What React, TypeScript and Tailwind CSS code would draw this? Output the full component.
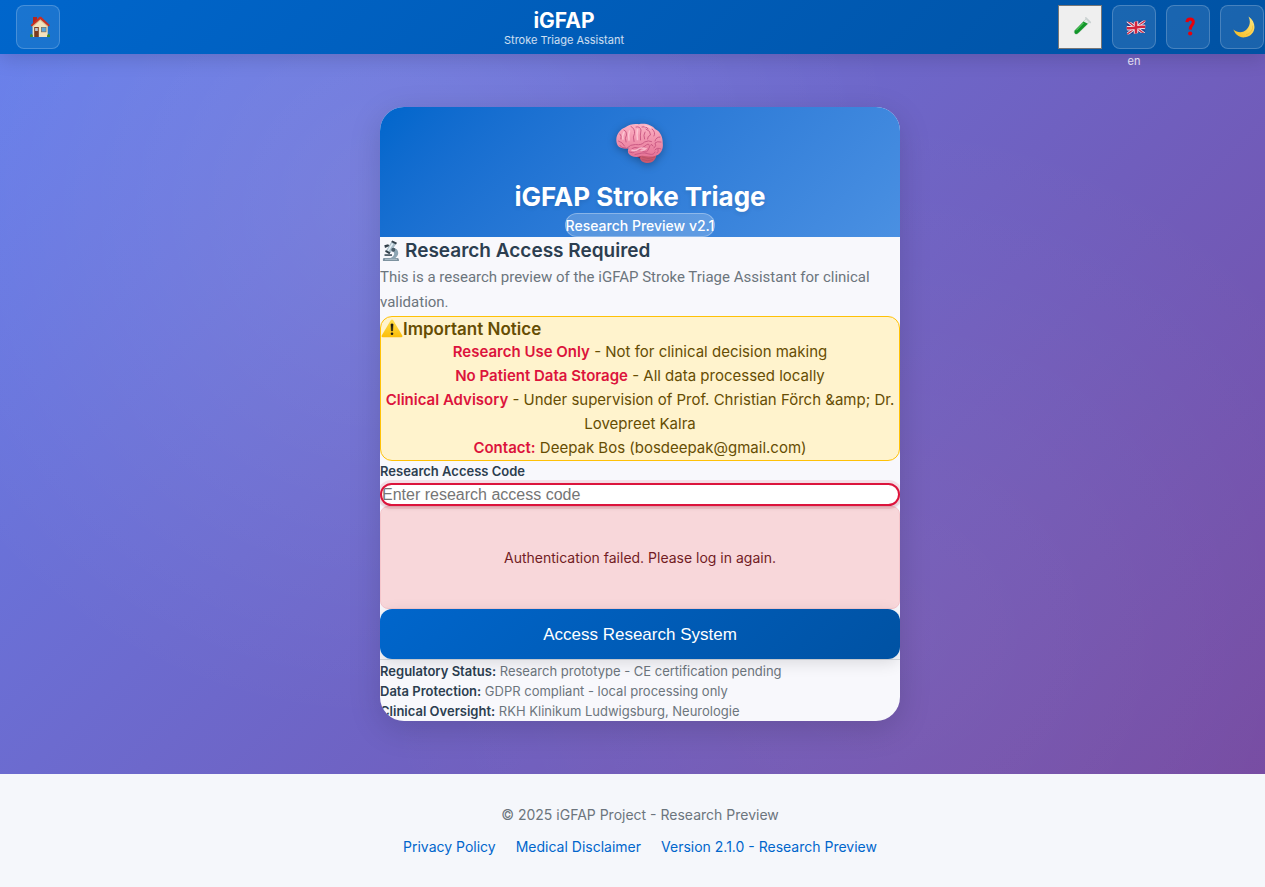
import React from "react";

const UI = "font-[Inter,'Liberation_Sans',sans-serif]";

function HouseIcon() {
  return (
    <svg width="22" height="22" viewBox="0 0 22 22" aria-hidden="true">
      <rect x="4" y="1" width="4" height="6" fill="#b3261e" />
      <path d="M3.6 9.5 11.3 2l7.4 7.5V21H3.6z" fill="#f3e2bd" />
      <path d="M3.6 9.5 11.3 2l7.4 7.5v1.8L11.3 4.6 3.6 11.3z" fill="#d8bf90" />
      <path d="M1.6 9.2 10.6.8h1.5l8.8 8.4-1.2 1.2-8.4-7.2-8.5 7.2z" fill="#c92f22" />
      <rect x="5.2" y="11" width="4.6" height="10" fill="#7a3b22" />
      <rect x="6.1" y="12" width="2.7" height="3" fill="#b9c4cf" />
      <rect x="12" y="11" width="5.4" height="5.2" fill="#8b6a45" />
      <rect x="12.6" y="11.5" width="4.2" height="4.1" fill="#58a6dc" />
      <path d="M1 21v-1.6q1-1.8 2-1.2t.8 2.8zM18 21q-.2-2.4 1-2.8t2 1.2V21z" fill="#3f8a2a" />
    </svg>
  );
}

function TubeIcon() {
  return (
    <svg width="22" height="22" viewBox="0 0 22 22" aria-hidden="true">
      <path d="M15.3 2.600 18.6 5.900 7.1 17.400Q5.400 19 3.900 17.700 2.300 16 3.900 14.200z" fill="#e3ebe6" stroke="#a9b8b0" strokeWidth=".5" />
      <path d="M12.500 5.600 16.800 7.700 7 17.300Q5.400 18.800 4 17.500 2.600 16 4 14.300z" fill="#12962a" />
      <path d="M12.600 6.800 5.200 14.400" stroke="#6edc70" strokeWidth="1" />
      <path d="M14.800 1.900 19.300 6.400" stroke="#c9d0d0" strokeWidth="1.500" strokeLinecap="round" />
    </svg>
  );
}

function FlagIcon() {
  return (
    <svg width="20" height="15" viewBox="0 0 20 15" aria-hidden="true">
      <defs>
        <clipPath id="flag-shape">
          <path d="M.6 1.600Q5 3 10 1.600T19.400 .6L19 13Q14 12.400 9.600 13.600T1 14.200z" />
        </clipPath>
      </defs>
      <g clipPath="url(#flag-shape)">
        <rect width="20" height="15" fill="#26418f" />
        <path d="M0 0 20 15M20 0 0 15" stroke="#e9e9f2" strokeWidth="3" />
        <path d="M0 0 20 15M20 0 0 15" stroke="#d3233c" strokeWidth="1.300" />
        <path d="M10 0V15M0 8Q5 8.800 10 7.600T20 7" stroke="#e9e9f2" strokeWidth="4.400" fill="none" />
        <path d="M10 0V15M0 8Q5 8.800 10 7.600T20 7" stroke="#d3233c" strokeWidth="2.600" fill="none" />
      </g>
    </svg>
  );
}

function QuestionIcon() {
  return (
    <svg width="22" height="22" viewBox="0 0 22 22" aria-hidden="true">
      <path d="M7.900 6.100Q8.300 3 11.200 3q3.100 0 3.100 3.100 0 1.800-1.500 3.300-1.500 1.500-1.600 4.200" fill="none" stroke="#e8000b" strokeWidth="3" />
      <circle cx="11.200" cy="17.500" r="2.100" fill="#e8000b" />
    </svg>
  );
}

function MoonIcon() {
  return (
    <svg width="24" height="24" viewBox="0 0 24 24" aria-hidden="true">
      <defs>
        <linearGradient id="moon-fill" x1="0" y1="1" x2="1" y2="0">
          <stop offset="0" stopColor="#f6b91e" />
          <stop offset="1" stopColor="#ffe880" />
        </linearGradient>
      </defs>
      <path d="M16.500 1.500C25.500 7.500 24.300 20.800 13 22.300 7.300 23 3 19.500 1.400 14.600c4.300 3.600 10 3.400 13.400-.3 3.400-3.700 3.900-8.500 1.700-12.800z" fill="url(#moon-fill)" />
      <path d="M20.700 10.500q.5 7-6.700 9.400" fill="none" stroke="#e9a514" strokeWidth=".8" opacity=".5" />
    </svg>
  );
}

function BrainIcon() {
  return (
    <svg width="50" height="44" viewBox="0 0 50 44" className="drop-shadow-[0_2px_4px_rgba(0,0,0,0.3)]" aria-hidden="true">
      <defs>
        <linearGradient id="brain-fill" x1="0" y1="0" x2="0" y2="1">
          <stop offset="0" stopColor="#fdb3c4" />
          <stop offset="1" stopColor="#e57396" />
        </linearGradient>
      </defs>
      <path d="M21 33q3 4 6 4l4 3-2-9z" fill="#7d2748" />
      <path d="M25 36c0-4 5-5 9-5s8 1 7 4-4 6-8 6-8-2-8-5z" fill="#c9596f" />
      <path d="M27 35q6 3 13 0M27 37.500q6 2.500 11 0" stroke="#b04a63" strokeWidth=".6" fill="none" />
      <path d="M2 22C-.5 15 4 7.500 10 5.500 14 2 20 1.500 24 2.200 30 .8 37 3 40 7c5 2 8 8 7.700 14 1 6-2 12-8 13-5 1.500-9-.5-13-.3-5 2.300-11 1.300-13.500-2.700-.4-1.800-.5-3 .3-4.500C8 27 3.500 26 2 22z" fill="url(#brain-fill)" />
      <g fill="none" stroke="#c65580" strokeWidth=".9" strokeLinecap="round" strokeLinejoin="round">
        <path d="M11.500 26.500q4-4.500 9-4 6 1 9-2.500 4-2 7-.5M11 26Q6 26 5 23.500M3.500 19q4 1 6 5M5 12q2 2 1 5M9 8q3 1 2.500 5-2 3-.5 7M16 4.500q4 2 3.500 7-2 3-.5 8M21 5q4-1 5 3-1 5-.5 10M27 5q5-1 6 2M30 10q-2 3-.5 7M31 7q5 2 4.500 6-3 1-3 4M37 7q4 3 2 7M45 15q-4 0-5 4M46 20q-4-1-6 1 2 3-1 5M46 27q-4-2-6 1" />
        <path d="M14 30q4 2 7-1t7 0 6-3 4-2M17 26.500q3-2 6-.5t7-2 4-1M20 32.500q5-1 7-1.500t7 1 6-2M42 31q2-1 1-4" />
      </g>
      <path d="M9 10q-2 4-1 7M14.500 9q-1.500 4-.5 9M22.500 7.500q-1 5 0 10M17 28.300q4 1 6-1t6-1M26 28.500q3 0 5-2M30 4q4 0 6 2" stroke="#ffd0dc" strokeWidth="1.600" strokeLinecap="round" fill="none" opacity=".75" />
    </svg>
  );
}

function MicroscopeIcon() {
  return (
    <svg width="20" height="22" viewBox="0 0 20 22" className="shrink-0" aria-hidden="true">
      <path d="M3 18h13.500q1.500 0 1.500 3H2q-.5-3 1-3z" fill="#7d929f" />
      <path d="M11.500 7.500q6 1 5.700 6-.3 3-3.200 5H8.500q4.500-2 4.700-4.800-.2-2.700-3.700-2.600z" fill="#8da5b3" />
      <path d="M3.500 14.300H11v1.600H3.500z" fill="#41525e" />
      <path d="M10.500 1.800 15 4l-5.600 9L5 10.600z" fill="#a9bdc8" />
      <path d="M11.600 3.500 7 10.800" stroke="#e4eef4" strokeWidth="1.500" />
      <path d="M11.300.4 16 2.800l-1 1.700-4.800-2.400zM4.800 10l4.600 2.600-1 1.600-4.300-2.400zM3.300 5.200l3.900-.9 1.200 1.600-4.400 2z" fill="#33404a" />
      <circle cx="12.300" cy="9.800" r="2" fill="#4a5c68" />
      <path d="M4 19.300h12" stroke="#b9c9d2" strokeWidth=".9" />
    </svg>
  );
}

function WarningIcon() {
  return (
    <svg width="22" height="20" viewBox="0 0 22 20" className="shrink-0" aria-hidden="true">
      <defs>
        <linearGradient id="warn-fill" x1="0" y1="0" x2="0" y2="1">
          <stop offset="0" stopColor="#ffdf4f" />
          <stop offset="1" stopColor="#fbbd08" />
        </linearGradient>
      </defs>
      <path d="M9.900 1.100q1.100-1.400 2.200 0L21.300 16.600q.6 1.600-1 1.700H1.700Q.1 18.200.7 16.600z" fill="url(#warn-fill)" />
      <path d="M9.900 5.200q1.100-.9 2.200 0l-.5 6.700h-1.200z" fill="#1c1a12" stroke="#1c1a12" strokeWidth=".5" />
      <circle cx="11" cy="14.800" r="1.300" fill="#1c1a12" />
    </svg>
  );
}

function HeaderButton({ label, children }: { label: string; children: React.ReactNode }) {
  return (
    <button
      type="button"
      aria-label={label}
      className="flex size-11 shrink-0 items-center justify-center rounded-lg border border-white/20 bg-white/10 pl-[3px]"
    >
      {children}
    </button>
  );
}

const notices = [
  { term: "Research Use Only", text: " - Not for clinical decision making" },
  { term: "No Patient Data Storage", text: " - All data processed locally" },
  { term: "Clinical Advisory", text: " - Under supervision of Prof. Christian Förch &amp; Dr. Lovepreet Kalra" },
  { term: "Contact:", text: " Deepak Bos (bosdeepak@gmail.com)" },
];

const facts = [
  { term: "Regulatory Status:", text: " Research prototype - CE certification pending" },
  { term: "Data Protection:", text: " GDPR compliant - local processing only" },
  { term: "Clinical Oversight:", text: " RKH Klinikum Ludwigsburg, Neurologie" },
];

export default function App() {
  return (
    <div className={`flex min-h-screen flex-col overflow-x-hidden ${UI}`}>
      <header className="relative z-10 flex items-center bg-linear-135 from-[#0066cc] to-[#0052a3] py-[5px] pr-px pl-4 text-white shadow-[0_4px_20px_rgba(0,0,0,0.15)]">
        <HeaderButton label="Home">
          <HouseIcon />
        </HeaderButton>
        <div className="flex-1 pt-[3px] pl-2.5 text-center">
          <h1 className="text-[21px] leading-6 font-bold">iGFAP</h1>
          <p className="text-[11px] leading-[15px] text-white/80">Stroke Triage Assistant</p>
        </div>
        <div className="flex gap-2.5">
          <button
            type="button"
            aria-label="Run test case"
            className="flex size-11 items-center justify-center border border-[#767676] bg-[#efefef] pl-[3px]"
          >
            <TubeIcon />
          </button>
          <div className="relative">
            <HeaderButton label="Switch language">
              <FlagIcon />
            </HeaderButton>
            <span className="absolute top-full left-0 mt-1 w-full text-center text-[11px] leading-4 text-white/80">en</span>
          </div>
          <HeaderButton label="Help">
            <QuestionIcon />
          </HeaderButton>
          <HeaderButton label="Dark mode">
            <MoonIcon />
          </HeaderButton>
        </div>
      </header>

      <main className="flex flex-1 items-center justify-center bg-[radial-gradient(circle_at_30%_20%,rgba(255,255,255,0.1)_0%,transparent_50%),radial-gradient(circle_at_70%_80%,rgba(255,255,255,0.05)_0%,transparent_50%),linear-gradient(135deg,#667eea_0%,#764ba2_100%)] py-8 pl-[15px]">
        <div className="w-full max-w-[520px] overflow-hidden rounded-3xl bg-[#f8f8fc] shadow-[0_8px_32px_rgba(0,0,0,0.15)]">
          <div className="flex flex-col items-center bg-linear-135 from-[#0066cc] to-[#4a90e2] pt-[15px] text-white">
            <BrainIcon />
            <h2 className="mt-[14px] text-[26px] leading-[33px] font-bold [text-shadow:0_2px_4px_rgba(0,0,0,0.1)]">
              iGFAP Stroke Triage
            </h2>
            <span className="rounded-full border border-white/30 bg-white/20 pt-0.5 text-sm leading-5 font-medium">
              Research Preview v2.1
            </span>
          </div>

          <h3 className="flex items-center gap-1 pl-px text-[19px] leading-7 font-semibold text-[#2c3e50]">
            <MicroscopeIcon />
            Research Access Required
          </h3>
          <p className="font-[Roboto,sans-serif] text-[15px] leading-[25px] text-[#6c757d]">
            This is a research preview of the iGFAP Stroke Triage Assistant for clinical validation.
          </p>

          <section className="mt-px rounded-xl border border-[#ffc107] bg-[#fff3cd] text-[#664d03]">
            <h4 className="flex items-center pt-px text-[17px] leading-[22px] font-semibold">
              <WarningIcon />
              Important Notice
            </h4>
            <ul className="text-center text-[15px] leading-6">
              {notices.map((n) => (
                <li key={n.term}>
                  <strong className="font-semibold text-[#dc143c]">{n.term}</strong>
                  {n.text}
                </li>
              ))}
            </ul>
          </section>

          <form onSubmit={(e) => e.preventDefault()}>
            <label htmlFor="access-code" className="block pb-0.5 text-[13px] leading-5 font-semibold text-[#2c3e50]">
              Research Access Code
            </label>
            <input
              id="access-code"
              type="password"
              placeholder="Enter research access code"
              className="relative block h-[23px] w-full rounded-xl border-2 border-[#dc143c] bg-white font-['Liberation_Sans',sans-serif] text-base leading-[19px] shadow-[0_0_0_3px_rgba(220,20,60,0.1),0_2px_4px_rgba(0,0,0,0.12)] outline-none placeholder:text-[#757575]"
            />
            <div role="alert" className="flex h-[103px] items-center justify-center rounded-lg border border-[#f5c6cb] bg-[#f8d7da] text-sm text-[#721c24]">
              Authentication failed. Please log in again.
            </div>
            <button
              type="submit"
              className="relative block h-[50px] w-full rounded-xl bg-linear-135 from-[#0066cc] to-[#0052a3] pt-px font-['Liberation_Sans',sans-serif] text-[17px] text-white shadow-[0_4px_16px_rgba(0,0,0,0.12)]"
            >
              Access Research System
            </button>
          </form>

          <div className="border-t border-[#d5dae0] pt-px text-[13px] leading-5 text-[#6c757d]">
            {facts.map((f) => (
              <p key={f.term}>
                <strong className="font-semibold text-[#2c3e50]">{f.term}</strong>
                {f.text}
              </p>
            ))}
          </div>
        </div>
      </main>

      <footer className="flex flex-col items-center gap-3 bg-[#f5f7fb] py-[30px] pl-[15px] text-sm leading-5">
        <p className="pt-px text-[#6c757d]">© 2025 iGFAP Project - Research Preview</p>
        <nav className="flex gap-5 text-[#0066cc]">
          <a href="#privacy">Privacy Policy</a>
          <a href="#disclaimer">Medical Disclaimer</a>
          <a href="#version">Version 2.1.0 - Research Preview</a>
        </nav>
      </footer>
    </div>
  );
}
